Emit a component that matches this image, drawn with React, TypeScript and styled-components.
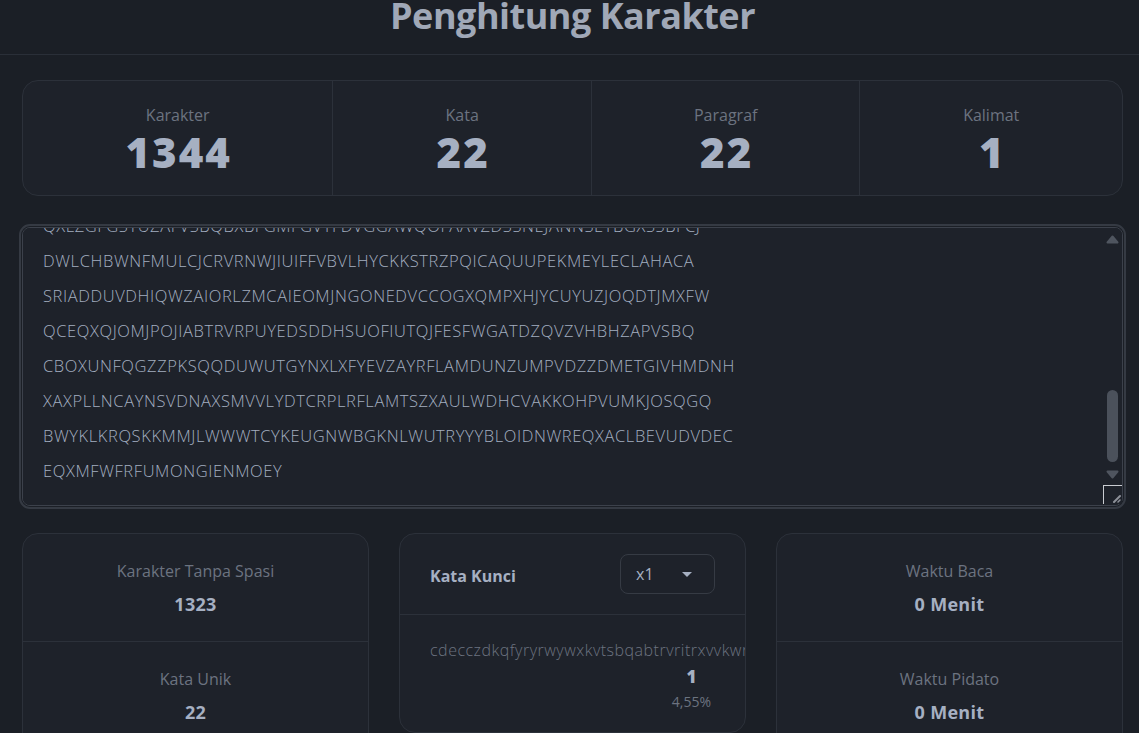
import React, { useEffect, useRef } from "react";
import styled, { createGlobalStyle } from "styled-components";

const GlobalStyle = createGlobalStyle`
  html, body { margin: 0; padding: 0; background: #1b1f26; overflow: hidden; }
  body { font-family: "Open Sans", "Noto Sans", sans-serif; color: #a3adbf; }
  * { box-sizing: border-box; }
`;

const Header = styled.header`
  height: 55px;
  padding-left: 6px;
  border-bottom: 1px solid #2a2f38;
  display: flex;
  justify-content: center;
  align-items: flex-start;
  overflow: hidden;
`;

const Title = styled.h1`
  margin: -6px 0 0;
  font-size: 36px;
  line-height: 44px;
  font-weight: 700;
  color: #a0a8b7;
  letter-spacing: -0.5px;
`;

const Main = styled.main`
  padding: 25px 16px 0 22px;
  display: flex;
  flex-direction: column;
`;

const StatsCard = styled.section`
  display: grid;
  grid-template-columns: 310fr 259fr 269fr 263fr;
  background: #1e222a;
  border: 1px solid #2c313a;
  border-radius: 16px;
  overflow: hidden;
`;

const StatCell = styled.div`
  display: flex;
  flex-direction: column;
  align-items: center;
  padding: 24px 0 22px;
  & + & { border-left: 1px solid #2c313a; }
`;

const StatLabel = styled.div`
  font-size: 16px;
  line-height: 20px;
  color: #6c7380;
`;

const StatValue = styled.div`
  margin-top: 6px;
  font-size: 42px;
  line-height: 42px;
  font-weight: 800;
  letter-spacing: 2px;
  padding-left: 2px;
  color: #a6b0c2;
`;

const EditorWrap = styled.div`
  position: relative;
  margin-top: 31px;
`;

const Editor = styled.textarea`
  display: block;
  height: 279px;
  width: 100%;
  resize: none;
  background: #1e222a;
  color: #a3aec0;
  border: 1px solid #3c414b;
  border-radius: 8px;
  outline: 2px solid #353a43;
  outline-offset: 1px;
  padding: 15px 20px 17px;
  font-family: "Open Sans", "Noto Sans", sans-serif;
  font-weight: 300;
  font-size: 16.5px;
  letter-spacing: 0.6px;
  line-height: 35px;
  color-scheme: dark;
  white-space: pre;
  overflow-y: scroll;
  overflow-x: hidden;
  scrollbar-width: none;
  &::-webkit-scrollbar { display: none; }
`;

const ScrollTrack = styled.div`
  position: absolute;
  top: 8px;
  right: 4px;
  width: 13px;
  height: 244px;
  display: flex;
  flex-direction: column;
  align-items: center;
  pointer-events: none;
`;

const Thumb = styled.div`
  margin-top: auto;
  width: 11px;
  height: 72px;
  border-radius: 6px;
  background: #4b515b;
`;

const ArrowSvg = styled.svg<{ $down?: boolean }>`
  display: block;
  width: 13px;
  height: 9px;
  margin-top: ${(p) => (p.$down ? "8px" : "0")};
  transform: ${(p) => (p.$down ? "rotate(180deg)" : "none")};
`;

const Resizer = styled.div`
  position: absolute;
  right: 1px;
  bottom: 2px;
  width: 19px;
  height: 19px;
  border-top: 1px solid #c9ccd1;
  border-left: 1px solid #c9ccd1;
  background: #1e222a;
  display: flex;
  align-items: flex-end;
  justify-content: flex-end;
  padding: 0 1px 1px 0;
  pointer-events: none;
`;

const BottomGrid = styled.section`
  margin-top: 27px;
  display: grid;
  grid-template-columns: repeat(3, 1fr);
  gap: 30px;
  align-items: start;
`;

const Card = styled.div`
  background: #1e222a;
  border: 1px solid #2c313a;
  border-radius: 16px;
  overflow: hidden;
`;

const InfoRow = styled.div`
  display: flex;
  flex-direction: column;
  align-items: center;
  padding: 25px 0 24px;
  & + & { border-top: 1px solid #2c313a; }
`;

const InfoLabel = styled.div`
  font-size: 16px;
  line-height: 24px;
  color: #6c7380;
`;

const InfoValue = styled.div`
  margin-top: 8px;
  font-size: 18px;
  line-height: 26px;
  font-weight: 700;
  letter-spacing: 0.3px;
  color: #a6b0c2;
`;

const CardHeader = styled.div`
  display: flex;
  align-items: center;
  justify-content: space-between;
  padding: 20px 30px 20px 30px;
  border-bottom: 1px solid #2c313a;
`;

const CardTitle = styled.div`
  padding-top: 3px;
  font-size: 16px;
  font-weight: 700;
  color: #a6b0c2;
`;

const Select = styled.div`
  width: 95px;
  height: 40px;
  border: 1px solid #363b44;
  border-radius: 8px;
  display: flex;
  align-items: center;
  justify-content: space-between;
  padding: 0 22px 0 15px;
  font-size: 16px;
  color: #a6b0c2;
`;

const Caret = styled.span`
  width: 0;
  height: 0;
  border-left: 5px solid transparent;
  border-right: 5px solid transparent;
  border-top: 5px solid #a6b0c2;
`;

const KeywordBody = styled.div`
  padding: 23px 30px 20px;
  display: flex;
  flex-direction: column;
`;

const KeywordWord = styled.div`
  font-size: 16px;
  line-height: 24px;
  font-weight: 300;
  letter-spacing: 0.5px;
  color: #6c7380;
  white-space: nowrap;
`;

const KeywordCount = styled.div`
  margin-top: 3px;
  align-self: flex-end;
  display: flex;
  flex-direction: column;
  align-items: center;
  margin-right: 4px;
`;

const CountNum = styled.div`
  font-size: 17px;
  line-height: 24px;
  font-weight: 800;
  color: #a6b0c2;
`;

const CountPct = styled.div`
  margin-top: 3px;
  font-size: 14px;
  line-height: 20px;
  color: #6c7380;
`;

const VISIBLE = [
  "QXLZGFGSTUZAFVSBQBXBFGMFGVTFDVGGAWQOFAAVZDSSNEJANNSETBGXSSBFCJ",
  "DWLCHBWNFMULCJCRVRNWJIUIFFVBVLHYCKKSTRZPQICAQUUPEKMEYLECLAHACA",
  "SRIADDUVDHIQWZAIORLZMCAIEOMJNGONEDVCCOGXQMPXHJYCUYUZJOQDTJMXFW",
  "QCEQXQJOMJPOJIABTRVRPUYEDSDDHSUOFIUTQJFESFWGATDZQVZVHBHZAPVSBQ",
  "CBOXUNFQGZZPKSQQDUWUTGYNXLXFYEVZAYRFLAMDUNZUMPVDZZDMETGIVHMDNH",
  "XAXPLLNCAYNSVDNAXSMVVLYDTCRPLRFLAMTSZXAULWDHCVAKKOHPVUMKJOSQGQ",
  "BWYKLKRQSKKMMJLWWWTCYKEUGNWBGKNLWUTRYYYBLOIDNWREQXACLBEVUDVDEC",
  "EQXMFWFRFUMONGIENMOEY",
];

function makeLines(): string[] {
  let seed = 12345;
  const rnd = () => {
    seed = (seed * 1103515245 + 12345) & 0x7fffffff;
    return seed / 0x7fffffff;
  };
  const letters = "ABCDEFGHIJKLMNOPQRSTUVWXYZ";
  const out: string[] = [];
  for (let i = 0; i < 14; i++) {
    let s = i === 0 ? "CDECCZDKQFYRYRWYWXKVTSBQABTRVRITRXVVKW" : "";
    while (s.length < 62) s += letters[Math.floor(rnd() * 26)];
    out.push(s);
  }
  return [...out, ...VISIBLE];
}

const LINES = makeLines();
const TEXT = LINES.join("\n");
const FIRST = LINES[0].toLowerCase();

const stats = [
  { label: "Karakter", value: "1344" },
  { label: "Kata", value: "22" },
  { label: "Paragraf", value: "22" },
  { label: "Kalimat", value: "1" },
];

function Arrow({ down }: { down?: boolean }) {
  return (
    <ArrowSvg $down={down} viewBox="0 0 13 9" aria-hidden="true">
      <path d="M6.5 1.5 L11.5 7.5 L1.5 7.5 Z" fill="#4f555f" stroke="#4f555f" strokeWidth="2" strokeLinejoin="round" />
    </ArrowSvg>
  );
}

export default function App() {
  const ref = useRef<HTMLTextAreaElement>(null);
  useEffect(() => {
    if (ref.current) ref.current.scrollTop = ref.current.scrollHeight;
  }, []);
  return (
    <>
      <GlobalStyle />
      <Header>
        <Title>Penghitung Karakter</Title>
      </Header>
      <Main>
        <StatsCard>
          {stats.map((s) => (
            <StatCell key={s.label}>
              <StatLabel>{s.label}</StatLabel>
              <StatValue>{s.value}</StatValue>
            </StatCell>
          ))}
        </StatsCard>
        <EditorWrap>
          <Editor ref={ref} defaultValue={TEXT} spellCheck={false} />
          <ScrollTrack aria-hidden="true">
            <Arrow />
            <Thumb />
            <Arrow down />
          </ScrollTrack>
          <Resizer aria-hidden="true">
            <svg width="9" height="9" viewBox="0 0 9 9">
              <path d="M2 8 L8 2" stroke="#8d9199" strokeWidth="2" strokeLinecap="round" />
              <path d="M6 8 L8 6" stroke="#8d9199" strokeWidth="1.5" strokeLinecap="round" />
            </svg>
          </Resizer>
        </EditorWrap>
        <BottomGrid>
          <Card>
            <InfoRow>
              <InfoLabel>Karakter Tanpa Spasi</InfoLabel>
              <InfoValue>1323</InfoValue>
            </InfoRow>
            <InfoRow>
              <InfoLabel>Kata Unik</InfoLabel>
              <InfoValue>22</InfoValue>
            </InfoRow>
          </Card>
          <Card>
            <CardHeader>
              <CardTitle>Kata Kunci</CardTitle>
              <Select>
                <span>x1</span>
                <Caret />
              </Select>
            </CardHeader>
            <KeywordBody>
              <KeywordWord>{FIRST}</KeywordWord>
              <KeywordCount>
                <CountNum>1</CountNum>
                <CountPct>4,55%</CountPct>
              </KeywordCount>
            </KeywordBody>
          </Card>
          <Card>
            <InfoRow>
              <InfoLabel>Waktu Baca</InfoLabel>
              <InfoValue>0 Menit</InfoValue>
            </InfoRow>
            <InfoRow>
              <InfoLabel>Waktu Pidato</InfoLabel>
              <InfoValue>0 Menit</InfoValue>
            </InfoRow>
          </Card>
        </BottomGrid>
      </Main>
    </>
  );
}
